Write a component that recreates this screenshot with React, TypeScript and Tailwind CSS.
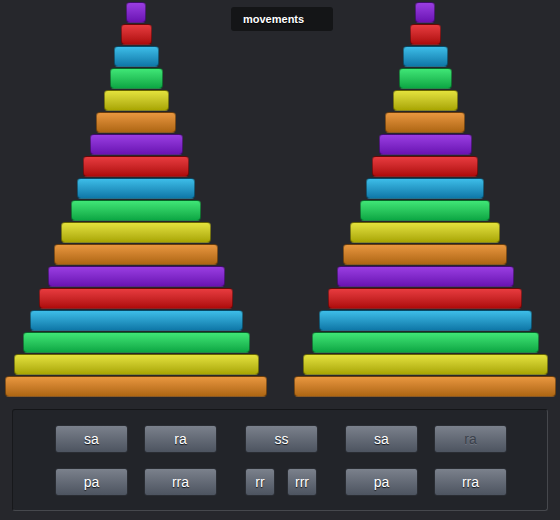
import React from "react";

const WIDTHS = [
  "w-[20px]", "w-[31px]", "w-[45px]", "w-[53px]", "w-[65px]", "w-[80px]",
  "w-[93px]", "w-[106px]", "w-[118px]", "w-[130px]", "w-[150px]", "w-[164px]",
  "w-[177px]", "w-[194px]", "w-[213px]", "w-[227px]", "w-[245px]", "w-[262px]",
];

const COLORS = [
  "from-[#9a3de2] to-[#6a12b2]", // purple
  "from-[#e83b3f] to-[#ae0a0a]", // red
  "from-[#3dbde8] to-[#0e78a8]", // blue
  "from-[#3fe676] to-[#0aa744]", // green
  "from-[#e4e23c] to-[#a9a600]", // yellow
  "from-[#e9973f] to-[#ae6612]", // orange
];

function Tower() {
  return (
    <div className="flex w-[262px] flex-col items-center gap-px">
      {WIDTHS.map((w, i) => (
        <div
          key={i}
          className={`h-[21px] rounded-[4px] border border-black/40 bg-linear-to-b ${w} ${COLORS[i % 6]}`}
        />
      ))}
    </div>
  );
}

function Btn({ label, wide = true, disabled = false }: { label: string; wide?: boolean; disabled?: boolean }) {
  return (
    <button
      className={`flex h-[28px] items-center justify-center rounded-[3px] border border-[#2a2d33] bg-linear-to-b from-[#7b818c] to-[#4d5460] text-[14px] ${
        wide ? "w-[73px]" : "w-[30px]"
      } ${
        disabled
          ? "text-[#3b414b] [text-shadow:0_1px_0_rgba(255,255,255,0.15)]"
          : "text-white [text-shadow:0_1px_1px_rgba(0,0,0,0.8)]"
      }`}
    >
      {label}
    </button>
  );
}

export default function App() {
  return (
    <div className="relative h-[520px] w-[560px] overflow-hidden bg-[#26272c] font-['Liberation_Sans',Arial,sans-serif]">
      <div className="absolute left-[231px] top-[7px] flex h-[24px] w-[102px] items-center rounded-[3px] bg-[#141517] pl-[12px] text-[11px] font-bold text-white [text-shadow:0_1px_1px_rgba(0,0,0,0.9)]">
        movements
      </div>

      <div className="flex gap-[27px] pl-[5px] pt-[2px]">
        <Tower />
        <Tower />
      </div>

      <div className="ml-[12px] mt-[12px] flex h-[102px] w-[536px] flex-col gap-[15px] rounded-[3px] border border-[#46484d] border-t-[#141518] border-l-[#17181b] bg-[#222429] pl-[42px] pt-[15px]">
        <div className="flex">
          <div className="flex gap-[16px]">
            <Btn label="sa" />
            <Btn label="ra" />
          </div>
          <div className="ml-[28px]">
            <Btn label="ss" />
          </div>
          <div className="ml-[27px] flex gap-[16px]">
            <Btn label="sa" />
            <Btn label="ra" disabled />
          </div>
        </div>
        <div className="flex">
          <div className="flex gap-[16px]">
            <Btn label="pa" />
            <Btn label="rra" />
          </div>
          <div className="ml-[28px] flex gap-[12px]">
            <Btn label="rr" wide={false} />
            <Btn label="rrr" wide={false} />
          </div>
          <div className="ml-[28px] flex gap-[16px]">
            <Btn label="pa" />
            <Btn label="rra" />
          </div>
        </div>
      </div>
    </div>
  );
}
